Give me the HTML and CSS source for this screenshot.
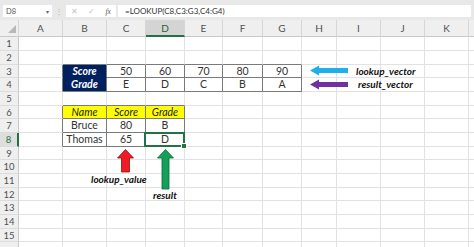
FILE: index.html
```html
<!DOCTYPE html>
<html>
<head>
<meta charset="utf-8">
<link rel="stylesheet" href="styles.css">
</head>
<body>
<div class="app">
  <div class="fbar">
    <div class="namebox"><span>D8</span><span class="dd">&#9662;</span></div>
    <div class="sep">&#8942;</div>
    <div class="btns"><span>&#10005;</span><span>&#10003;</span><span class="fx">fx</span></div>
    <div class="formula">=LOOKUP(C8,C3:G3,C4:G4)</div>
  </div>
  <table class="grid">
    <colgroup>
      <col class="w19"><col class="w44"><col class="w44"><col class="w39"><col class="w39"><col class="w38"><col class="w40"><col class="w39"><col class="w35"><col class="w44"><col class="w44"><col class="w44"><col class="w20">
    </colgroup>
    <thead>
      <tr><th class="corner"><span class="tri"></span></th><th>A</th><th>B</th><th>C</th><th class="hsel">D</th><th>E</th><th>F</th><th>G</th><th>H</th><th>I</th><th>J</th><th>K</th><th></th></tr>
    </thead>
    <tbody>
      <tr><th>1</th><td></td><td></td><td></td><td></td><td></td><td></td><td></td><td></td><td></td><td></td><td></td><td></td></tr>
      <tr><th>2</th><td></td><td class="bt"></td><td class="bt"></td><td class="bt"></td><td class="bt"></td><td class="bt"></td><td class="bt"></td><td></td><td></td><td></td><td></td><td></td></tr>
      <tr><th>3</th><td class="bl"></td><td class="navy nb">Score</td><td class="tb">50</td><td class="tb">60</td><td class="tb">70</td><td class="tb">80</td><td class="tb">90</td><td></td><td></td><td></td><td></td><td></td></tr>
      <tr><th>4</th><td class="bl"></td><td class="navy">Grade</td><td class="tb">E</td><td class="tb">D</td><td class="tb">C</td><td class="tb">B</td><td class="tb">A</td><td></td><td></td><td></td><td></td><td></td></tr>
      <tr><th>5</th><td></td><td class="bt"></td><td class="bt"></td><td class="bt"></td><td></td><td></td><td></td><td></td><td></td><td></td><td></td><td></td></tr>
      <tr><th>6</th><td class="bl"></td><td class="tb yel">Name</td><td class="tb yel">Score</td><td class="tb yel">Grade</td><td></td><td></td><td></td><td></td><td></td><td></td><td></td><td></td></tr>
      <tr><th>7</th><td class="bl"></td><td class="tb">Bruce</td><td class="tb">80</td><td class="tb">B</td><td></td><td></td><td></td><td></td><td></td><td></td><td></td><td></td></tr>
      <tr><th class="rsel">8</th><td class="bl"></td><td class="tb">Thomas</td><td class="tb">65</td><td class="tb sel">D</td><td></td><td></td><td></td><td></td><td></td><td></td><td></td><td></td></tr>
      <tr><th>9</th><td></td><td></td><td></td><td></td><td></td><td></td><td></td><td></td><td></td><td></td><td></td><td></td></tr>
      <tr><th>10</th><td></td><td></td><td></td><td></td><td></td><td></td><td></td><td></td><td></td><td></td><td></td><td></td></tr>
      <tr><th>11</th><td></td><td></td><td></td><td></td><td></td><td></td><td></td><td></td><td></td><td></td><td></td><td></td></tr>
      <tr><th>12</th><td></td><td></td><td></td><td></td><td></td><td></td><td></td><td></td><td></td><td></td><td></td><td></td></tr>
      <tr><th>13</th><td></td><td></td><td></td><td></td><td></td><td></td><td></td><td></td><td></td><td></td><td></td><td></td></tr>
      <tr><th>14</th><td></td><td></td><td></td><td></td><td></td><td></td><td></td><td></td><td></td><td></td><td></td><td></td></tr>
      <tr><th>15</th><td></td><td></td><td></td><td></td><td></td><td></td><td></td><td></td><td></td><td></td><td></td><td></td></tr>
      <tr><th></th><td></td><td></td><td></td><td></td><td></td><td></td><td></td><td></td><td></td><td></td><td></td><td></td></tr>
    </tbody>
  </table>
  <svg class="draw" width="474" height="247" viewBox="0 0 474 247">
    <polygon fill="#1fb0ea" points="310,70.5 319,65.5 319,68 348,68 348,73 319,73 319,75.5"/>
    <polygon fill="#7030a0" points="310,84.5 319,79.5 319,82 348,82 348,87 319,87 319,89.5"/>
    <polygon fill="#f01c24" stroke="#8a1010" stroke-width="0.8" points="125.5,149.5 133.5,158 129.5,158 129.5,172 121.5,172 121.5,158 117.5,158"/>
    <polygon fill="#13a15a" stroke="#0b6b3a" stroke-width="0.8" points="165.5,149.5 173.5,158 169,158 169,189 162,189 162,158 157.5,158"/>
  </svg>
  <span class="lbl l1">lookup_vector</span>
  <span class="lbl l2">result_vector</span>
  <span class="lbl l3">lookup_value</span>
  <span class="lbl l4">result</span>
</div>
</body>
</html>
```

FILE: styles.css
```css
* { box-sizing: border-box; margin: 0; padding: 0; }
html, body { width: 474px; height: 247px; overflow: hidden; background: #fff; }
body { font-family: Lato, "Liberation Sans", sans-serif; color: #222; }
.app { position: relative; width: 474px; height: 247px; overflow: hidden; }

.fbar { height: 20px; background: #e8e8e8; display: flex; align-items: flex-start; padding-top: 5px; }
.namebox { margin-left: 3px; width: 49px; height: 12px; background: #fff; display: flex; align-items: center; justify-content: space-between; padding: 0 3px; font-size: 7.5px; color: #555; }
.dd { font-size: 6px; color: #666; }
.sep { width: 14px; text-align: center; font-size: 8px; line-height: 12px; color: #b0b0b0; }
.btns { width: 50px; height: 12px; background: #fff; display: flex; align-items: center; justify-content: space-around; font-size: 7.5px; color: #c0c0c0; }
.fx { color: #555; font-family: "Liberation Serif", serif; font-style: italic; }
.formula { margin-left: 2px; width: 353px; height: 12px; background: #fff; font-size: 8px; line-height: 12px; color: #333; padding-left: 7px; }

.grid { border-collapse: separate; border-spacing: 0; table-layout: fixed; width: 489px; }
.w19 { width: 19px; } .w20 { width: 20px; } .w35 { width: 35px; } .w38 { width: 38px; }
.w39 { width: 39px; } .w40 { width: 40px; } .w44 { width: 44px; }

thead tr { height: 17px; }
thead th { background: #efefef; border-right: 1px solid #d6d6d6; border-bottom: 1px solid #c8c8c8; font-weight: 400; font-size: 10px; color: #505050; text-align: center; vertical-align: middle; }
thead th.hsel { background: #d4d4d4; border-bottom: 2px solid #217346; color: #2a5e3f; }
th.corner { position: relative; }
.tri { position: absolute; right: 2px; bottom: 3px; width: 0; height: 0; border-left: 8px solid transparent; border-bottom: 8px solid #b8b8b8; }

tbody tr { height: 14px; }
tbody tr:nth-child(3n) { height: 13px; }
tbody th { background: #efefef; border-right: 1px solid #c8c8c8; border-bottom: 1px solid #dcdcdc; font-weight: 400; font-size: 9.5px; color: #505050; text-align: center; vertical-align: middle; }
tbody th.rsel { background: #dedede; border-right: 2px solid #217346; color: #217346; }

td { border-right: 1px solid #e2e2e2; border-bottom: 1px solid #e2e2e2; font-size: 10.5px; line-height: 1; color: #333; text-align: center; vertical-align: middle; white-space: nowrap; overflow: visible; }
td.bt { border-bottom-color: #7a7a7a; }
td.bl { border-right-color: #7a7a7a; }
td.tb { border-right-color: #7a7a7a; border-bottom-color: #7a7a7a; }
td.navy { background: #002060; color: #fff; font-weight: 700; font-style: italic; border-right-color: #7a7a7a; border-bottom-color: #7a7a7a; }
td.nb { border-bottom-color: #002060; }
td.yel { background: #ffff00; font-style: italic; color: #222; }
td.sel { position: relative; }
td.sel::after { content: ""; position: absolute; left: -2px; top: -1px; right: -1px; bottom: -1px; border: 2px solid #217346; }
td.sel::before { content: ""; position: absolute; right: -3px; bottom: -3px; width: 4px; height: 4px; background: #217346; border: 1px solid #fff; z-index: 1; }

.draw { position: absolute; left: 0; top: 0; }
.lbl { position: absolute; font-weight: 700; font-style: italic; font-size: 10px; line-height: 12px; color: #111; white-space: nowrap; }
.l1 { left: 356px; top: 65px; }
.l2 { left: 358px; top: 78px; }
.l3 { left: 91px; top: 173px; }
.l4 { left: 153px; top: 189px; }
```
